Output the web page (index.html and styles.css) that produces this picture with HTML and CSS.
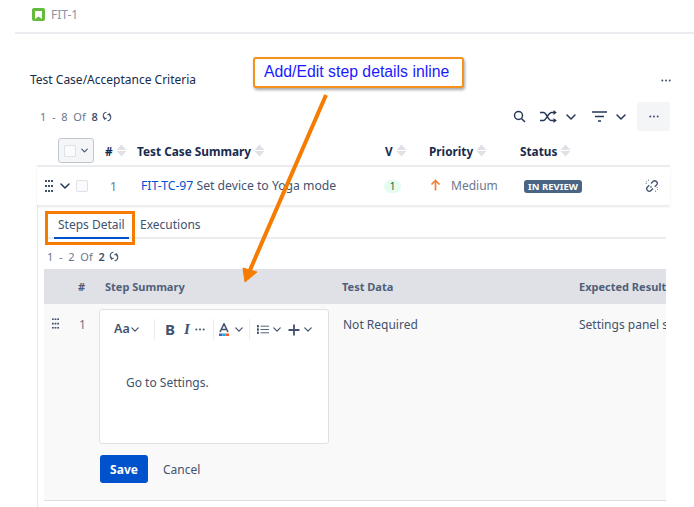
FILE: index.html
```html
<!DOCTYPE html>
<html lang="en">
<head>
<meta charset="utf-8">
<title>FIT-1</title>
<link rel="stylesheet" href="styles.css">
</head>
<body>
<svg width="0" height="0" class="defs">
  <defs>
    <symbol id="sort" viewBox="1.500 .5 11 13"><path d="M7 1l5 5.400H2zM7 13l5-5.400H2z" fill="#dfe1e6"/></symbol>
    <symbol id="chev" viewBox="0 0 10 6"><path d="M1 1l4 4 4-4" fill="none" stroke="currentColor" stroke-width="1.500" stroke-linecap="round" stroke-linejoin="round"/></symbol>
    <symbol id="grip" viewBox="0 0 8 12"><path d="M0 0h2v2H0zM3 0h2v2H3zM6 0h2v2H6zM0 5h2v2H0zM3 5h2v2H3zM6 5h2v2H6zM0 10h2v2H0zM3 10h2v2H3zM6 10h2v2H6z" fill="currentColor"/></symbol>
    <symbol id="sync" viewBox="0 0 10 11"><path d="M4.500 1.200C2.500 1.400 1.200 3 1.200 5c0 1.200.5 2.200 1.300 2.900M2 5.600l.6 2.500 2-1M5.500 9.800C7.500 9.600 8.800 8 8.800 6c0-1.200-.5-2.200-1.300-2.900M8 5.400L7.400 2.900l-2 1" fill="none" stroke="currentColor" stroke-width="1.100"/></symbol>
    <symbol id="dots" viewBox="0 0 10 3"><circle cx="1.300" cy="1.500" r="1" fill="currentColor"/><circle cx="5" cy="1.500" r="1" fill="currentColor"/><circle cx="8.700" cy="1.500" r="1" fill="currentColor"/></symbol>
  </defs>
</svg>

<header class="issue-bar">
  <span class="story-icon"><svg width="7" height="8" viewBox="0 0 7 8"><path d="M0 0h7v8L3.500 5.500 0 8z" fill="#fff"/></svg></span>
  <span class="issue-key">FIT-1</span>
</header>

<main class="panel">
  <div class="title-row">
    <h2 class="panel-title">Test Case/Acceptance Criteria</h2>
    <svg class="dots-sm" width="10" height="3"><use href="#dots"/></svg>
  </div>

  <div class="tools-row">
    <div class="count count-main">1&nbsp; - &nbsp;8&nbsp; Of&nbsp; <b>8</b> <svg class="sync" width="10" height="11"><use href="#sync"/></svg></div>
    <div class="tools">
      <svg class="ic-search" width="13" height="13" viewBox="0 0 13 13"><circle cx="5.500" cy="5.500" r="4" fill="none" stroke="#253858" stroke-width="1.500"/><path d="M8.500 8.500l3.500 3.500" stroke="#253858" stroke-width="1.500"/></svg>
      <svg class="ic-shuffle" width="17" height="13" viewBox="0 0 17 13"><path d="M0 2.500h3.500c3 0 4.500 8 8 8H15M0 10.500h3.500c3 0 4.500-8 8-8H15" fill="none" stroke="#253858" stroke-width="1.500"/><path d="M13.500 0l3.300 2.500-3.300 2.500zM13.500 8l3.300 2.500-3.300 2.500z" fill="#253858"/></svg>
      <svg class="ic-chev-a" width="10" height="6"><use href="#chev"/></svg>
      <svg class="ic-filter" width="15" height="11" viewBox="0 0 15 11"><path d="M0 1h15M3 5.500h9M6 10h3" stroke="#253858" stroke-width="1.500"/></svg>
      <svg class="ic-chev-b" width="10" height="6"><use href="#chev"/></svg>
      <span class="more-btn"><svg width="10" height="3"><use href="#dots"/></svg></span>
    </div>
  </div>

  <div class="head-row">
    <span class="select-all"><i class="check"></i><svg width="7" height="5"><use href="#chev"/></svg></span>
    <span class="col col-num">#<svg class="sort" width="11" height="13"><use href="#sort"/></svg></span>
    <span class="col col-sum">Test Case Summary<svg class="sort" width="11" height="13"><use href="#sort"/></svg></span>
    <span class="col col-v">V<svg class="sort" width="11" height="13"><use href="#sort"/></svg></span>
    <span class="col col-pri">Priority<svg class="sort" width="11" height="13"><use href="#sort"/></svg></span>
    <span class="col col-st">Status<svg class="sort" width="11" height="13"><use href="#sort"/></svg></span>
  </div>

  <div class="detail">
    <div class="case-row">
      <svg class="grip" width="8" height="12"><use href="#grip"/></svg>
      <svg class="row-chev" width="10" height="6"><use href="#chev"/></svg>
      <i class="check check-row"></i>
      <span class="cell-num">1</span>
      <span class="cell-sum"><a class="case-link">FIT-TC-97</a> Set device to Yoga mode</span>
      <span class="cell-v"><span class="ver">1</span></span>
      <span class="cell-pri"><svg width="11" height="12" viewBox="0 0 11 12"><path d="M5.500 11.500V1.500M1.500 5.500l4-4 4 4" fill="none" stroke="#f18134" stroke-width="1.700"/></svg>Medium</span>
      <span class="cell-st"><span class="lozenge">IN REVIEW</span></span>
      <svg class="unlink" width="14" height="14" viewBox="0 0 14 14"><path d="M6 4.500L8 2.500c1-1 2.500-1 3.500 0s1 2.500 0 3.500L9.800 7.800M8 9.500l-2 2c-1 1-2.500 1-3.500 0s-1-2.500 0-3.500l1.700-1.800M5.500 8.500l1-1" fill="none" stroke="#42526e" stroke-width="1.300"/><path d="M1 2l1 1M3.500 .5v1.500M.5 4.500H2M12 10l1 1M10.500 11.500V13M11.500 8.500H13" stroke="#7a869a" stroke-width=".8"/></svg>
    </div>

    <nav class="tabs">
      <span class="tab tab-on">Steps Detail</span>
      <span class="tab">Executions</span>
    </nav>

    <div class="count count-sub">1&nbsp; - &nbsp;2&nbsp; Of&nbsp; <b>2</b> <svg class="sync" width="10" height="11"><use href="#sync"/></svg></div>

    <div class="steps">
      <div class="steps-head">
        <span class="s-num">#</span>
        <span class="s-sum">Step Summary</span>
        <span class="s-data">Test Data</span>
        <span class="s-exp">Expected Result</span>
      </div>
      <div class="steps-row">
        <svg class="s-grip" width="7" height="11" viewBox="0 0 8 12"><use href="#grip"/></svg>
        <span class="s-idx">1</span>
        <div class="s-edit">
          <div class="editor">
            <div class="ed-tools">
              <span class="ed-group ed-aa"><span class="aa">Aa</span><svg width="8" height="5"><use href="#chev"/></svg></span>
              <span class="ed-group ed-fmt"><span class="bold">B</span><span class="ital">I</span><svg class="dots-ed" width="10" height="3"><use href="#dots"/></svg></span>
              <span class="ed-group ed-col">
                <span class="color-a"><svg width="10" height="13" viewBox="0 0 10 13"><path d="M1 9L5 .8 9 9M2.500 6.500h5" fill="none" stroke="#42526e" stroke-width="1.500"/><path d="M0 10.500h3.300V13H0z" fill="#6554c0"/><path d="M3.300 10.500h3.400V13H3.300z" fill="#00b8d9"/><path d="M6.700 10.500H10V13H6.700z" fill="#ff5630"/></svg></span>
                <svg width="8" height="5"><use href="#chev"/></svg>
              </span>
              <span class="ed-group ed-ins">
                <svg width="12" height="9" viewBox="0 0 12 9"><path d="M0 .5h1.500v1.500H0zM0 3.800h1.500v1.500H0zM0 7h1.500v1.500H0zM3.500 1.200H12M3.500 4.500H12M3.500 7.800H12" fill="#42526e" stroke="#42526e" stroke-width=".9"/></svg>
                <svg width="8" height="5"><use href="#chev"/></svg>
                <svg class="plus" width="12" height="12" viewBox="0 0 12 12"><path d="M6 .5v11M.5 6h11" stroke="#42526e" stroke-width="1.800"/></svg>
                <svg width="8" height="5"><use href="#chev"/></svg>
              </span>
            </div>
            <p class="ed-text">Go to Settings.</p>
          </div>
          <div class="actions">
            <button class="save">Save</button>
            <span class="cancel">Cancel</span>
          </div>
        </div>
        <span class="s-data cell">Not Required</span>
        <span class="s-exp cell">Settings panel shows</span>
      </div>
    </div>
  </div>
</main>

<div class="callout">Add/Edit step details inline</div>
<div class="tab-mark"></div>
<svg class="arrow" width="100" height="200" viewBox="0 0 100 200"><path d="M86 3L10 178" fill="none" stroke="#f57c00" stroke-width="4"/><path d="M5 190L3 176 17 180z" fill="#f57c00" stroke="#f57c00" stroke-width="1"/></svg>
</body>
</html>
```

FILE: styles.css
```css
* { box-sizing: border-box; }
html, body { margin: 0; padding: 0; }
body {
  width: 694px;
  height: 507px;
  overflow: hidden;
  background: #fff;
  font-family: "Noto Sans", "Open Sans", sans-serif;
  font-size: 12px;
  color: #42526e;
  position: relative;
}
.defs { position: absolute; }
svg { display: block; flex: none; }

.issue-bar {
  margin-left: 15px;
  height: 34px;
  padding: 8px 0 0 17px;
  display: flex;
  align-items: flex-start;
  gap: 6px;
  border-bottom: 2px solid #ebecf0;
}
.story-icon {
  width: 13px;
  height: 13px;
  border-radius: 2px;
  background: #63ba3c;
  display: flex;
  align-items: center;
  justify-content: center;
}
.issue-key { color: #8993a4; font-size: 12px; line-height: 14px; }

.panel { padding: 0 24px 0 30px; }
.title-row {
  height: 28px;
  margin-top: 31px;
  display: flex;
  align-items: center;
  justify-content: space-between;
}
.panel-title { margin: 0; font-size: 12px; font-weight: 400; color: #172b4d; }
.dots-sm { color: #42526e; margin-right: -1px; margin-top: 2px; }

.tools-row {
  height: 29px;
  margin-top: 9px;
  padding-left: 10px;
  display: flex;
  align-items: center;
  justify-content: space-between;
}
.count { font-size: 11px; color: #6b778c; display: flex; align-items: center; white-space: pre; }
.count b { font-weight: 600; color: #42526e; }
.count .sync { margin-left: 4px; color: #42526e; }
.tools { display: flex; align-items: center; color: #253858; }
.ic-chev-a { margin-left: 9px; }
.ic-shuffle { margin-left: 14px; }
.ic-filter { margin-left: 16px; }
.ic-chev-b { margin-left: 9px; }
.more-btn {
  margin-left: 11px;
  width: 33px;
  height: 29px;
  background: #f4f5f7;
  border-radius: 3px;
  color: #42526e;
  display: flex;
  align-items: center;
  justify-content: center;
}

.head-row {
  height: 29px;
  margin-top: 7px;
  margin-left: 7px;
  padding: 0 0 3px 21px;
  border-bottom: 2px solid #ebecf0;
  display: grid;
  grid-template-columns: 47px 32px 248px 44px 91px 1fr;
  align-items: center;
}
.col {
  display: flex;
  align-items: center;
  font-weight: 700;
  font-size: 11.800px;
  color: #172b4d;
}
.sort { margin-left: 3px; }
.select-all {
  width: 36px;
  height: 25px;
  border: 1px solid #c1c7d0;
  border-radius: 3px;
  background: #f4f5f7;
  display: flex;
  align-items: center;
  gap: 5px;
  padding-left: 5px;
  color: #42526e;
}
.check {
  display: block;
  width: 12px;
  height: 12px;
  border: 1.500px solid #dfe1e6;
  border-radius: 2px;
  background: #fafbfc;
}

.detail { margin-left: 7px; height: 341px; border-left: 1px solid #e8e8e8; }
.case-row {
  height: 38px;
  margin-left: -1px;
  padding-left: 8px;
  background: #fff;
  box-shadow: 0 2px 2px rgba(9, 30, 66, .09);
  display: flex;
  align-items: center;
  position: relative;
}
.grip { color: #42526e; }
.row-chev { margin-left: 7px; color: #253858; }
.check-row { margin-left: 6px; }
.cell-num { width: 12px; margin-left: 22px; color: #6b778c; }
.cell-sum { width: 244px; margin: 0 0 2px 19px; font-size: 12.200px; white-space: nowrap; }
.case-link { color: #0052cc; }
.cell-v { width: 45px; margin-left: -1px; }
.ver {
  display: block;
  width: 17px;
  height: 13px;
  border-radius: 7px;
  background: #e3fcef;
  color: #006644;
  font-size: 10px;
  line-height: 13px;
  text-align: center;
}
.cell-pri { width: 90px; display: flex; align-items: center; gap: 10px; margin: 0 0 2px 1px; color: #6b778c; }
.lozenge {
  display: block;
  width: 58px;
  height: 13px;
  border-radius: 3px;
  background: #4a6583;
  color: #fff;
  font-size: 9.500px;
  font-weight: 700;
  line-height: 13px;
  text-align: center;
  white-space: nowrap;
}
.cell-st { width: 121px; margin-left: 4px; }

.tabs {
  height: 34px;
  margin-right: 4px;
  margin-left: 7px;
  padding-left: 9px;
  border-bottom: 2px solid #ebecf0;
  display: flex;
  align-items: flex-end;
}
.tab { height: 32px; padding: 0 4px; margin-bottom: -2px; line-height: 35px; white-space: nowrap; }
.tab-on { width: 75px; border-bottom: 2px solid #0052cc; }
.tab + .tab { margin-left: 7px; }

.count-sub { height: 30px; padding: 5px 0 0 9px; }

.steps { margin-left: 6px; margin-right: 4px; }
.steps-head {
  height: 35px;
  background: #dfe1e6;
  display: grid;
  grid-template-columns: 61px 237px 237px 1fr;
  align-items: center;
  font-size: 11px;
  font-weight: 700;
  color: #505f79;
  overflow: hidden;
  white-space: nowrap;
}
.s-num { padding-left: 34px; grid-column: 1; }
.steps-row {
  height: 197px;
  background: #f9f9f9;
  border-bottom: 1px solid #dfdfdf;
  display: grid;
  grid-template-columns: 26px 29px 243px 236px 1fr;
  overflow: hidden;
  white-space: nowrap;
}
.s-grip { color: #42526e; margin: 14px 0 0 8px; }
.s-idx { margin-top: 12px; padding-left: 9px; color: #6b778c; }
.s-edit { margin-top: 5px; }
.steps-row .cell { margin-top: 12px; padding-left: 1px; }
.editor {
  width: 230px;
  height: 135px;
  background: #fff;
  border: 1px solid #dfe1e6;
  border-radius: 3px;
}
.ed-tools { height: 31px; margin-top: 4px; display: flex; align-items: center; color: #42526e; }
.ed-group { height: 21px; display: flex; align-items: center; }
.ed-group + .ed-group { border-left: 1px solid #ebecf0; }
.ed-aa { width: 54px; padding-left: 14px; gap: 1px; }
.aa { font-size: 12.500px; font-weight: 600; line-height: 1; }
.ed-fmt { width: 59px; padding-left: 10px; }
.bold { font-size: 15px; font-weight: 700; line-height: 1; }
.ital { width: 10px; text-align: center; font-family: "Liberation Serif", serif; font-size: 15px; font-style: italic; font-weight: 700; margin-left: 7px; line-height: 1; }
.dots-ed { margin-left: 3px; }
.ed-col { width: 36px; padding-left: 5px; gap: 6px; }
.ed-ins { padding-left: 7px; gap: 4px; }
.plus { margin-left: 3px; }
.ed-text { margin: 29px 0 0 26px; }
.actions { margin-top: 11px; display: flex; align-items: center; padding-left: 1px; }
.save {
  width: 48px;
  height: 28px;
  padding: 0;
  background: #0052cc;
  color: #fff;
  border: 0;
  border-radius: 3px;
  font: 700 12px "Noto Sans", sans-serif;
}
.cancel { margin-left: 15px; }

.callout {
  position: absolute;
  left: 253px;
  top: 57px;
  width: 211px;
  height: 31px;
  padding-left: 9px;
  border: 2px solid #f5921e;
  border-radius: 3px;
  background: #fff;
  box-shadow: 1px 2px 3px rgba(0, 0, 0, .35);
  font-family: "Liberation Sans", Arial, sans-serif;
  font-size: 15.800px;
  line-height: 25px;
  color: #1a1aff;
  white-space: nowrap;
}
.tab-mark {
  position: absolute;
  left: 45px;
  top: 211px;
  width: 90px;
  height: 34px;
  border: 3px solid #f57c00;
}
.arrow { position: absolute; left: 240px; top: 92px; }
```
